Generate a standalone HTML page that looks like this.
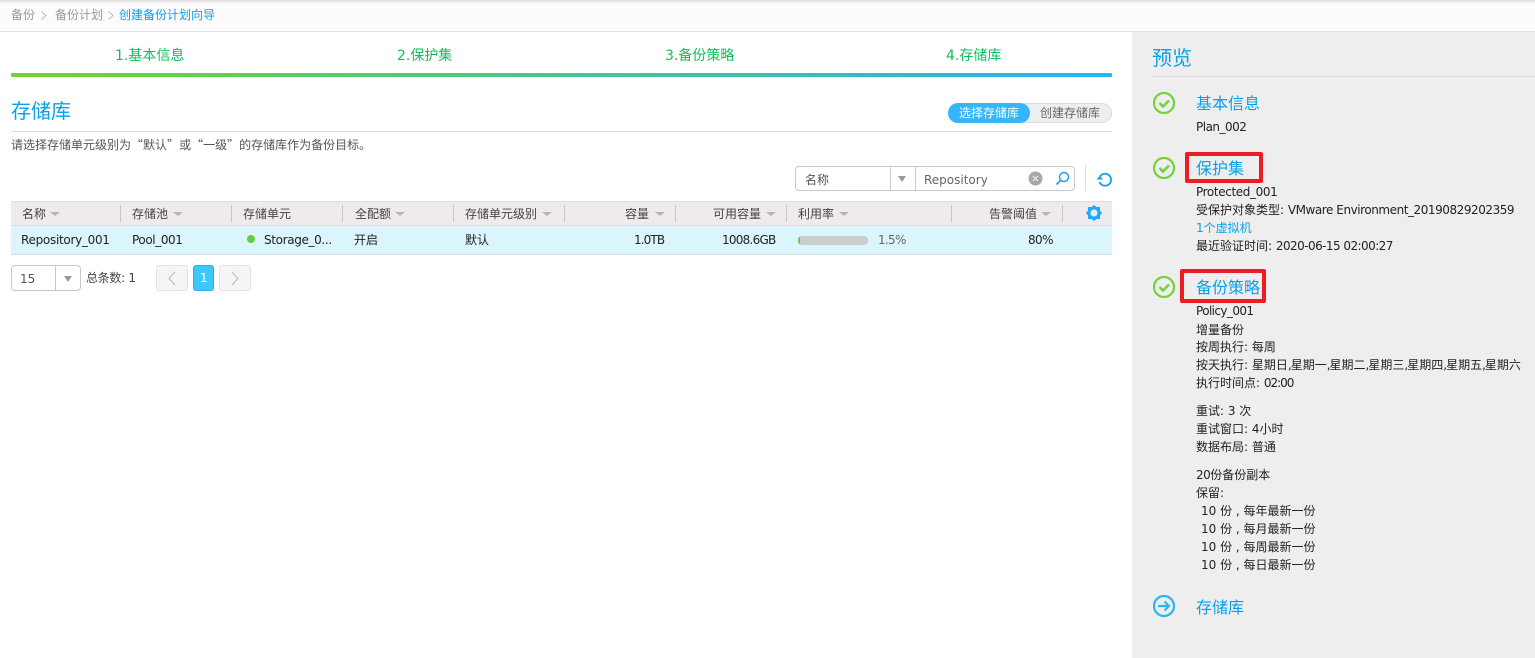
<!DOCTYPE html>
<html lang="zh"><head><meta charset="utf-8"><title>创建备份计划向导</title>
<style>
html,body{margin:0;padding:0;width:1535px;height:658px;overflow:hidden;background:#fff}
body{font-family:"DejaVu Sans","WenQuanYi Zen Hei","Noto Sans CJK SC",sans-serif;font-size:12px;color:#222;position:relative}
.a{position:absolute;white-space:nowrap;line-height:18px}
.b{position:absolute}
.blue{color:#09a2e8}
.green{color:#12bf5a}
.h{font-size:16px;color:#09a2e8;line-height:20px}
.th{color:#444;top:205px}
.sep{position:absolute;top:205px;width:1px;height:17px;background:#c9c6c9}
.car{position:absolute;top:212px;width:0;height:0;border-left:5px solid transparent;border-right:5px solid transparent;border-top:4px solid #b5b5b5}
.c{letter-spacing:-1px}
.q{font-family:"Noto Sans CJK SC",sans-serif}
</style></head><body>
<div class="b" style="left:0;top:0;width:1535px;height:31px;background:#fefbfe;border-bottom:1px solid #e2dfe2;box-sizing:content-box"></div>
<div class="b" style="left:0;top:0;width:1535px;height:4px;background:linear-gradient(#dcdcdc,#fefbfe)"></div>
<div class="a" style="left:11px;top:6px;color:#999">备份</div>
<svg class="b" style="left:40px;top:11px" width="8" height="9"><path d="M1.500 0.500l4.500 4-4.500 4" fill="none" stroke="#bbb"/></svg>
<div class="a" style="left:55px;top:6px;color:#999">备份计划</div>
<svg class="b" style="left:107px;top:11px" width="8" height="9"><path d="M1.500 0.500l4.500 4-4.500 4" fill="none" stroke="#bbb"/></svg>
<div class="a blue" style="left:119px;top:6px">创建备份计划向导</div>

<div class="a green" style="left:115px;top:47px;font-size:14px">1.基本信息</div>
<div class="a green" style="left:397px;top:47px;font-size:14px">2.保护集</div>
<div class="a green" style="left:665px;top:47px;font-size:14px">3.备份策略</div>
<div class="a green" style="left:946px;top:47px;font-size:14px">4.存储库</div>
<div class="b" style="left:11px;top:73px;width:1101px;height:4px;border-radius:1px;background:linear-gradient(90deg,#72d32f,#22b5f2)"></div>

<div class="a blue" style="left:11px;top:99px;font-size:20px;line-height:24px">存储库</div>
<div class="b" style="left:11px;top:131px;width:1101px;height:1px;background:#dcdcdc"></div>
<div class="a" style="left:11px;top:136px;color:#555">请选择存储单元级别为<span class="q">“</span>默认<span class="q">”</span>或<span class="q">“</span>一级<span class="q">”</span>的存储库作为备份目标。</div>

<div class="b" style="left:948px;top:103px;width:164px;height:20px;border-radius:10px;background:#eee;box-shadow:inset 0 0 0 1px #ddd"></div>
<div class="b" style="left:948px;top:103px;width:82px;height:20px;border-radius:10px;background:#36b6f8"></div>
<div class="a" style="left:959px;top:104px;color:#fff">选择存储库</div>
<div class="a" style="left:1040px;top:104px;color:#666">创建存储库</div>

<div class="b" style="left:795px;top:166px;width:280px;height:25px;border:1px solid #c8c8c8;border-radius:4px;box-sizing:border-box;background:#fff"></div>
<div class="b" style="left:890px;top:167px;width:1px;height:24px;background:#c8c8c8"></div>
<div class="b" style="left:915px;top:167px;width:1px;height:24px;background:#c8c8c8"></div>
<div class="a" style="left:805px;top:171px;color:#555">名称</div>
<div class="b" style="left:898px;top:176px;border-left:4px solid transparent;border-right:4px solid transparent;border-top:6px solid #999"></div>
<div class="a" style="left:924px;top:171px;color:#666">Repository</div>
<svg class="b" style="left:1028px;top:171px" width="15" height="15"><circle cx="7.500" cy="7.500" r="7" fill="#a8a8a8"/><path d="M5 5l5 5M10 5l-5 5" stroke="#eee" stroke-width="1.200"/></svg>
<svg class="b" style="left:1055px;top:171px" width="16" height="16"><circle cx="9" cy="6" r="4.500" fill="none" stroke="#12a0f0" stroke-width="1.400"/><path d="M5.500 9.500l-4 4" stroke="#12a0f0" stroke-width="1.600"/></svg>
<div class="b" style="left:1085px;top:165px;width:1px;height:26px;background:#ddd"></div>
<svg class="b" style="left:1096px;top:171px" width="17" height="17"><path d="M4 5.500A6 6 0 1 1 3.500 11" fill="none" stroke="#12a0f0" stroke-width="1.800"/><path d="M0.500 8.500h6.500l-3.200-3.800z" fill="#12a0f0"/></svg>

<div class="b" style="left:11px;top:201px;width:1101px;height:25px;background:#efeaee;border-top:1px solid #dedede;border-bottom:1px solid #dedede;box-sizing:border-box"></div>
<div class="b" style="left:11px;top:226px;width:1101px;height:28px;background:#dbf5fd;border-bottom:1px solid #dcdcdc"></div>

<div class="a th" style="left:22px">名称</div><div class="car" style="left:50px"></div>
<div class="sep" style="left:120px"></div>
<div class="a th" style="left:132px">存储池</div><div class="car" style="left:173px"></div>
<div class="sep" style="left:231px"></div>
<div class="a th" style="left:243px">存储单元</div>
<div class="sep" style="left:342px"></div>
<div class="a th" style="left:355px">全配额</div><div class="car" style="left:395px"></div>
<div class="sep" style="left:453px"></div>
<div class="a th" style="left:465px">存储单元级别</div><div class="car" style="left:542px"></div>
<div class="sep" style="left:564px"></div>
<div class="a th" style="left:625px">容量</div><div class="car" style="left:655px"></div>
<div class="sep" style="left:675px"></div>
<div class="a th" style="left:713px">可用容量</div><div class="car" style="left:766px"></div>
<div class="sep" style="left:786px"></div>
<div class="a th" style="left:798px">利用率</div><div class="car" style="left:839px"></div>
<div class="sep" style="left:951px"></div>
<div class="a th" style="left:989px">告警阈值</div><div class="car" style="left:1041px"></div>
<div class="sep" style="left:1062px"></div>
<svg class="b" style="left:1086px;top:205px" width="16" height="16"><polygon points="8,0 10.500,2 14,2 14,5.500 16,8 14,10.500 14,14 10.500,14 8,16 5.500,14 2,14 2,10.500 0,8 2,5.500 2,2 5.500,2" fill="#1eaaf5"/><circle cx="8" cy="8" r="3.500" fill="#efeaee"/></svg>

<div class="a" style="left:21px;top:231px;letter-spacing:-.29px">Repository_001</div>
<div class="a" style="left:132px;top:231px;letter-spacing:-.4px">Pool_001</div>
<div class="b" style="left:247px;top:235px;width:8px;height:8px;border-radius:50%;background:#62cf3e"></div>
<div class="a" style="left:264px;top:231px;letter-spacing:-.35px">Storage_0...</div>
<div class="a" style="left:354px;top:231px">开启</div>
<div class="a" style="left:465px;top:231px">默认</div>
<div class="a" style="left:634px;top:231px;letter-spacing:-.9px">1.0TB</div>
<div class="a" style="left:722px;top:231px;letter-spacing:-.75px">1008.6GB</div>
<div class="b" style="left:798px;top:236px;width:70px;height:9px;border-radius:4px;background:#cccccc;overflow:hidden"><div style="width:2px;height:9px;background:#62cf3e"></div></div>
<div class="a" style="left:878px;top:231px;color:#666;letter-spacing:-.7px">1.5%</div>
<div class="a" style="left:1028px;top:231px;letter-spacing:-.6px">80%</div>

<div class="b" style="left:11px;top:265px;width:70px;height:26px;border:1px solid #c8c8c8;border-radius:4px;box-sizing:border-box"></div>
<div class="b" style="left:55px;top:266px;width:1px;height:24px;background:#c8c8c8"></div>
<div class="a" style="left:20px;top:270px;color:#555">15</div>
<div class="b" style="left:64px;top:276px;border-left:4px solid transparent;border-right:4px solid transparent;border-top:6px solid #999"></div>
<div class="a" style="left:86px;top:269px;color:#444;letter-spacing:-.3px">总条数: 1</div>
<div class="b" style="left:156px;top:265px;width:32px;height:26px;background:#f6f4f6;border:1px solid #e4e2e4;border-radius:3px;box-sizing:border-box"></div>
<svg class="b" style="left:166px;top:271px" width="12" height="15"><path d="M9 1l-6 6.500 6 6.500" fill="none" stroke="#bbb"/></svg>
<div class="b" style="left:193px;top:265px;width:21px;height:26px;background:#3fc6fb;border:1px solid #27aef0;border-radius:3px;box-sizing:border-box"></div>
<div class="a" style="left:200px;top:269px;color:#fff">1</div>
<div class="b" style="left:219px;top:265px;width:32px;height:26px;background:#f6f4f6;border:1px solid #e4e2e4;border-radius:3px;box-sizing:border-box"></div>
<svg class="b" style="left:229px;top:271px" width="12" height="15"><path d="M3 1l6 6.500-6 6.500" fill="none" stroke="#bbb"/></svg>

<div class="b" style="left:1132px;top:32px;width:403px;height:626px;background:#eee"></div>
<div class="a blue" style="left:1152px;top:46px;font-size:20px;line-height:24px">预览</div>
<div class="b" style="left:1152px;top:76px;width:383px;height:1px;background:#dcdcdc"></div>

<svg class="b" style="left:1153px;top:92px" width="22" height="22"><circle cx="11" cy="11" r="10" fill="none" stroke="#76d13c" stroke-width="2.200"/><path d="M6.500 11l3.500 3.500 6-6" fill="none" stroke="#76d13c" stroke-width="2.600"/></svg>
<div class="a h" style="left:1196px;top:94px">基本信息</div>
<div class="a" style="left:1196px;top:118px;letter-spacing:-.5px">Plan_002</div>

<svg class="b" style="left:1153px;top:157px" width="22" height="22"><circle cx="11" cy="11" r="10" fill="none" stroke="#76d13c" stroke-width="2.200"/><path d="M6.500 11l3.500 3.500 6-6" fill="none" stroke="#76d13c" stroke-width="2.600"/></svg>
<div class="b" style="left:1185px;top:152px;width:78px;height:31px;border:4px solid #ee1c25;border-radius:2px;box-sizing:border-box"></div>
<div class="a h" style="left:1196px;top:159px">保护集</div>
<div class="a" style="left:1196px;top:183px;letter-spacing:-.38px">Protected_001</div>
<div class="a" style="left:1196px;top:201px">受保护对象类型: <span style="letter-spacing:-.45px">VMware Environment_20190829202359</span></div>
<div class="a blue" style="left:1196px;top:219px">1个虚拟机</div>
<div class="a" style="left:1196px;top:237px">最近验证时间: <span style="letter-spacing:-.55px">2020-06-15 02:00:27</span></div>

<svg class="b" style="left:1153px;top:276px" width="22" height="22"><circle cx="11" cy="11" r="10" fill="none" stroke="#76d13c" stroke-width="2.200"/><path d="M6.500 11l3.500 3.500 6-6" fill="none" stroke="#76d13c" stroke-width="2.600"/></svg>
<div class="b" style="left:1180px;top:269px;width:86px;height:34px;border:4px solid #ee1c25;border-radius:2px;box-sizing:border-box"></div>
<div class="a h" style="left:1196px;top:278px">备份策略</div>
<div class="a" style="left:1196px;top:302px;letter-spacing:-.6px">Policy_001</div>
<div class="a" style="left:1196px;top:321px">增量备份</div>
<div class="a" style="left:1196px;top:338px">按周执行: 每周</div>
<div class="a" style="left:1196px;top:356px">按天执行: 星期日<span class="c">,</span>星期一<span class="c">,</span>星期二<span class="c">,</span>星期三<span class="c">,</span>星期四<span class="c">,</span>星期五<span class="c">,</span>星期六</div>
<div class="a" style="left:1196px;top:374px">执行时间点: <span style="letter-spacing:-1px">02:00</span></div>
<div class="a" style="left:1196px;top:402px">重试: 3 次</div>
<div class="a" style="left:1196px;top:420px">重试窗口: 4小时</div>
<div class="a" style="left:1196px;top:438px">数据布局: 普通</div>
<div class="a" style="left:1196px;top:466px"><span style="letter-spacing:-.5px">20</span>份备份副本</div>
<div class="a" style="left:1196px;top:484px">保留:</div>
<div class="a" style="left:1201px;top:502px">10 份 , 每年最新一份</div>
<div class="a" style="left:1201px;top:520px">10 份 , 每月最新一份</div>
<div class="a" style="left:1201px;top:538px">10 份 , 每周最新一份</div>
<div class="a" style="left:1201px;top:556px">10 份 , 每日最新一份</div>

<svg class="b" style="left:1153px;top:595px" width="22" height="22"><circle cx="11" cy="11" r="10" fill="none" stroke="#2db5f0" stroke-width="2.200"/><path d="M5 11h11M11.500 6.500l4.500 4.500-4.500 4.500" fill="none" stroke="#2db5f0" stroke-width="2.200"/></svg>
<div class="a h" style="left:1196px;top:598px">存储库</div>
</body></html>
